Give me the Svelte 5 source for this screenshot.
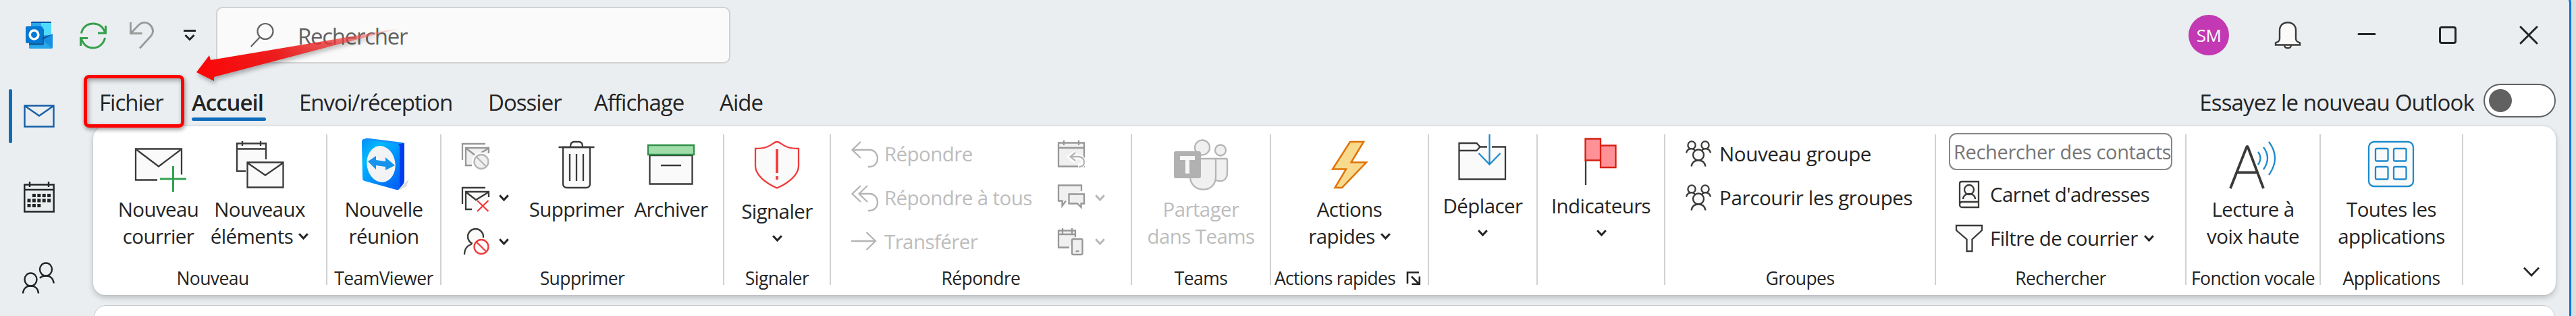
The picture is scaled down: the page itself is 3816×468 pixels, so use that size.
<script lang="ts">
  const tabs = ['Fichier', 'Accueil', 'Envoi/réception', 'Dossier', 'Affichage', 'Aide'];
  const active = 'Accueil';

  // day squares of the calendar icon, as column/row pairs
  const days = [
    [1, 0], [2, 0], [3, 0], [4, 0],
    [0, 1], [1, 1], [2, 1], [3, 1], [4, 1],
    [0, 2], [1, 2], [2, 2],
  ];
</script>

{#snippet chevron()}
  <svg class="chevron" width="15" height="10" viewBox="0 0 15 10" aria-hidden="true">
    <path d="M1.2 1.2 7.5 8 13.8 1.2" />
  </svg>
{/snippet}

{#snippet people()}
  <svg class="line" width="38" height="40" viewBox="0 0 38 40" aria-hidden="true">
    <g fill="#fafafa">
      <circle cx="9" cy="7" r="5.6" />
      <circle cx="29" cy="7" r="5.6" />
      <path d="M1 18.500c.5-4 4-6.500 8-6.200 2 0 4 1 5 2.500M37 18.500c-.5-4-4-6.500-8-6.200-2 0-4 1-5 2.500" />
      <circle cx="19" cy="21.500" r="8" />
      <path d="M8.500 38.500c1-6 5-9 10.500-9s9.500 3 10.500 9" />
    </g>
  </svg>
{/snippet}

{#snippet envelopes()}
  <path d="M1 25V1h34" />
  <path class="fill" d="M15 33H6V7h34v8" />
  <path d="m7 8 14 11L39 8" />
{/snippet}

{#snippet block()}
  <circle cx="29" cy="27.500" r="14" class="halo" />
  <circle cx="29" cy="27.500" r="10.500" />
  <path d="m21.500 20 15 15" />
{/snippet}

<div class="window">
  <header class="titlebar">
    <svg class="logo" width="40" height="40" viewBox="0 0 40 40" aria-hidden="true">
      <path d="M8 2a2 2 0 0 1 2-2h26a2 2 0 0 1 2 2v20H8z" fill="#28a8ea" />
      <path d="M23 2h15v18H23z" fill="#50d9ff" />
      <path d="M8 2a2 2 0 0 1 2-2h26a2 2 0 0 1 2 2H8z" fill="#0a4fa5" />
      <path d="M5 25h20l15-7v20a2 2 0 0 1-2 2H7a2 2 0 0 1-2-2z" fill="#1890e0" />
      <path d="M5 28h21l13 11.500-1 .5H7a2 2 0 0 1-2-2z" fill="#28a8ea" />
      <path d="m40 18.500-15 8.500v-4l14-4z" fill="#0a4f9c" />
      <path d="M8 10h17a2 2 0 0 1 2 2v21a2 2 0 0 1-2 2H5V20z" fill="#0b4c88" opacity=".75" />
      <rect y="7" width="25" height="25" rx="2" fill="#0078d4" />
      <ellipse cx="12.500" cy="19.500" rx="6.300" ry="6.500" fill="none" stroke="#fff" stroke-width="3.600" />
    </svg>
    <svg class="sync" width="40" height="40" viewBox="0 0 40 40" aria-hidden="true">
      <path d="M2.500 17.500C4 8.500 11 3 20 3c8.500 0 14.500 4.500 17.500 13M38.500 6v11H27M37.500 24c-1.500 8-8.500 15-17.500 15-8.500 0-14.500-5-17.500-13.500M1.500 36V24.500H12" />
    </svg>
    <svg class="undo" width="36" height="40" viewBox="0 0 36 40" aria-hidden="true">
      <path d="M1.500 1v16.500h17M2 17 14 4.500C19 0 26.500.5 31 5.500c4.500 5.500 4.500 11.500 0 16.500L15 39.500" />
    </svg>
    <svg class="customize" width="18" height="18" viewBox="0 0 18 18" aria-hidden="true">
      <path d="M0 2.500h18M2.500 9 9 15.500 15.500 9" />
    </svg>
    <div class="search">
      <svg width="35" height="36" viewBox="0 0 35 36" aria-hidden="true">
        <circle cx="22" cy="12.500" r="11.500" />
        <path d="M14 21 .8 35" />
      </svg>
      <span>Rechercher</span>
    </div>

    <div class="controls">
      <div class="avatar">SM</div>
      <svg class="bell" width="38" height="40" viewBox="0 0 38 40" aria-hidden="true">
        <path d="M14 35c.5 5.500 9.500 5.500 10 0" />
        <path d="M1 34.500v-3l4-2c1.500-1 2-2 2-4V13C7 6 12 1.200 19 1.200S31 6 31 13v12.500c0 2 .5 3 2 4l4 2v3z" />
      </svg>
      <svg class="caption" width="26" height="28" viewBox="0 0 26 28" aria-hidden="true">
        <path d="M1 12.500h24" />
      </svg>
      <svg class="caption" width="26" height="28" viewBox="0 0 26 28" aria-hidden="true">
        <rect x="1.500" y="2.500" width="23" height="23" rx="2.500" />
      </svg>
      <svg class="caption" width="26" height="28" viewBox="0 0 26 28" aria-hidden="true">
        <path d="m1 2 24 24M25 2 1 26" />
      </svg>
    </div>
  </header>

  <div class="content">
    <nav class="rail">
      <div class="rail-item selected">
        <svg width="46" height="34" viewBox="0 0 46 34" aria-hidden="true">
          <path d="M1.500 1.500h43v31h-43zM2 2l21 14.500L44 2" />
        </svg>
      </div>
      <div class="rail-item">
        <svg width="46" height="46" viewBox="0 0 46 46" aria-hidden="true">
          <path d="M1.300 4.500h43.400v40H1.300zM1.300 12h43.400M9 0v8M37 0v8" />
          {#each days as [col, row]}
            <rect x={5.5 + col * 7.4} y={18 + row * 7.5} width="5" height="5" />
          {/each}
        </svg>
      </div>
      <div class="rail-item">
        <svg width="48" height="48" viewBox="0 0 48 48" aria-hidden="true">
          <ellipse cx="35" cy="11" rx="9" ry="9.500" />
          <ellipse cx="12.500" cy="26" rx="9" ry="9.500" />
          <path d="M1 46.500c.5-7 5-11 11.500-11s11 4 11.500 11M26 24c2-2.500 5-3.500 9-3.500 6.500 0 11 4 11.700 11" />
        </svg>
      </div>
    </nav>

    <main>
      <div class="tab-row">
        <div class="tabs">
          {#each tabs as tab}
            <span class="tab" class:active={tab === active}>{tab}</span>
          {/each}
        </div>
        <div class="try-new">
          <span>Essayez le nouveau Outlook</span>
          <span class="toggle"></span>
        </div>
      </div>

      <section class="ribbon">
        <div class="group new">
          <div class="body">
            <div class="big">
              <svg class="line" width="80" height="80" viewBox="0 0 80 80" aria-hidden="true">
                <path class="fill" d="M38 62.500H6v-46h68v38" />
                <path d="m7 17.500 33 25 33-25" />
                <path class="green" d="M61.500 42v38M42 61h39" />
              </svg>
              <span>Nouveau<br />courrier</span>
            </div>
            <div class="big">
              <svg class="line" width="80" height="80" viewBox="0 0 80 80" aria-hidden="true">
                <path class="fill" d="M19 49.500H6V8.500h43V32M6 16.500h43M14 5v7M41 5v7" />
                <path class="fill" d="M21.500 36.500h53v37h-53z" />
                <path d="m22 37.500 26 18 26-18" />
              </svg>
              <span>Nouveaux<br />éléments {@render chevron()}</span>
            </div>
          </div>
          <div class="caption-text">Nouveau</div>
        </div>

        <div class="group teamviewer">
          <div class="body">
            <div class="big">
              <svg width="80" height="80" viewBox="0 0 80 80" aria-hidden="true">
                <defs>
                  <linearGradient id="tv" x1="0" y1="0" x2=".8" y2="1">
                    <stop offset="0" stop-color="#0a8cf5" />
                    <stop offset=".3" stop-color="#00b9ff" />
                    <stop offset=".6" stop-color="#0094ff" />
                    <stop offset="1" stop-color="#0066f5" />
                  </linearGradient>
                </defs>
                <path d="M62 76 77 61l-4 11-9 5z" fill="#bbb" opacity=".5" />
                <path d="M8 3 14 .5l53 6.500q3 1 3 4l-8 2z" fill="#1590ff" />
                <path d="M60 10 70 7.500v56q0 4-3 7l-6 6.500z" fill="#003cf0" />
                <path d="M7 6q0-4 4-4l47 7q5 1 5 5v59q0 5-5 4L11 64q-3-1-3-4z" fill="url(#tv)" />
                <ellipse cx="35.500" cy="39" rx="21" ry="27" transform="rotate(-8 35.500 39)" fill="#f1f3f5" />
                <path d="m16 35 12-8v6l14 2v-6l14 12-14 7v-5l-14-2v6z" fill="#1793ee" />
              </svg>
              <span>Nouvelle<br />réunion</span>
            </div>
          </div>
          <div class="caption-text">TeamViewer</div>
        </div>

        <div class="group delete">
          <div class="body">
            <div class="stack">
              <div class="small">
                <svg class="line disabled" width="40" height="40" viewBox="0 -4 40 40" aria-hidden="true">
                  {@render envelopes()}
                  <g class="light fill-block">{@render block()}</g>
                </svg>
              </div>
              <div class="small">
                <svg class="line" width="40" height="40" viewBox="0 -4 40 40" aria-hidden="true">
                  {@render envelopes()}
                  <path class="halo" d="m24 20 16 16M40 20 24 36" />
                  <path class="red" d="m23 20 16.500 16M39.500 20 23 36" />
                </svg>
                {@render chevron()}
              </div>
              <div class="small">
                <svg class="line" width="40" height="40" viewBox="0 0 40 40" aria-hidden="true">
                  <circle class="fill" cx="20.500" cy="12.500" r="11.500" />
                  <path class="fill" d="M4 39c0-8 4-14 13-16" />
                  <g class="red">{@render block()}</g>
                </svg>
                {@render chevron()}
              </div>
            </div>
            <div class="big">
              <svg class="line" width="80" height="80" viewBox="0 0 80 80" aria-hidden="true">
                <path d="M31 13c0-5 2-7 6-7h6c4 0 6 2 6 7" />
                <path class="fill" d="M20 14v54c0 4 2 6 6 6h28c4 0 6-2 6-6V14z" />
                <path d="M13.500 14h53M30 24v40M40 24v40M50 24v40" />
              </svg>
              <span>Supprimer</span>
            </div>
            <div class="big">
              <svg class="line" width="80" height="80" viewBox="0 0 80 80" aria-hidden="true">
                <path class="fill" d="M8.500 26h63v42.500h-63zM25 41h30" />
                <path class="lid" d="M6 11h68v14H6z" />
              </svg>
              <span>Archiver</span>
            </div>
          </div>
          <div class="caption-text">Supprimer</div>
        </div>

        <div class="group report">
          <div class="body">
            <div class="big">
              <svg class="line red" width="80" height="80" viewBox="0 0 80 80" aria-hidden="true">
                <path class="fill" d="M40 6c5 0 8 6 16 8 6 2 11 2 16 2v26c0 13-15 25-32 32.500C23 67 8 55 8 42V16c5 0 10 0 16-2 8-2 11-8 16-8z" />
                <path d="M40 17v35M40 57v5" class="heavy" />
              </svg>
              <span>Signaler<br />{@render chevron()}</span>
            </div>
          </div>
          <div class="caption-text">Signaler</div>
        </div>

        <div class="group reply">
          <div class="body">
            <div class="stack">
              <div class="small off">
                <svg class="line light" width="40" height="40" viewBox="0 0 40 40" aria-hidden="true">
                  <path d="M14 2 1.500 14 14 26M2 14h25c16 0 16 25 0 25h-2" />
                </svg>
                <span>Répondre</span>
              </div>
              <div class="small off">
                <svg class="line light" width="40" height="40" viewBox="0 0 40 40" aria-hidden="true">
                  <path d="M14 2 1.500 14 14 26M24 2 11.500 14 24 26M12 14h15c16 0 16 25 0 25h-2" />
                </svg>
                <span>Répondre à tous</span>
              </div>
              <div class="small off">
                <svg class="line light" width="40" height="40" viewBox="0 0 40 40" aria-hidden="true">
                  <path d="M0 19h36M22.500 6 36 19 22.500 32" />
                </svg>
                <span>Transférer</span>
              </div>
            </div>
            <div class="stack more">
              <div class="small off">
                <svg class="line disabled" width="40" height="40" viewBox="0 0 40 40" aria-hidden="true">
                  <path class="fill" d="M1 3.500h38v35H1zM1 11h38M9 0v7M31 0v7" />
                  <path class="halo" d="m26 18-8 6 8 7M18 24h12q8 1 8 8 0 6-8 6" />
                  <path class="light" d="m26 18-7.500 6 7.500 6M19 24h12q8 1 8 8 0 7-8 7" />
                </svg>
              </div>
              <div class="small off">
                <svg class="line disabled" width="40" height="40" viewBox="0 0 40 40" aria-hidden="true">
                  <path class="fill" d="M12 24.500 6.500 32v-7.500H1V1.500h34V10" />
                  <path class="fill" d="M16.500 14.500H39v14h-4.500V34L29 28.500H16.500z" />
                </svg>
                {@render chevron()}
              </div>
              <div class="small off">
                <svg class="line disabled" width="40" height="40" viewBox="0 0 40 40" aria-hidden="true">
                  <path class="fill" d="M17 28.500H1V3.500h25V13M1 9h25M7 0v8M21 0v8" />
                  <rect class="fill" x="21" y="16" width="15.500" height="23" rx="2" />
                  <path d="M26.500 34h5" />
                </svg>
                {@render chevron()}
              </div>
            </div>
          </div>
          <div class="caption-text">Répondre</div>
        </div>

        <div class="group teams">
          <div class="body">
            <div class="big off">
              <svg class="line light" width="80" height="80" viewBox="0 0 80 80" aria-hidden="true">
                <g fill="#f0f0f0">
                  <circle cx="42" cy="14.500" r="11" />
                  <circle cx="69" cy="18.500" r="8" />
                  <path d="M61 31h16q2 0 2 2v19c0 10-7 13-12 12-3 0-5-1-6-2z" />
                  <path d="M24 31h36q2 0 2 2v25c0 25-38 25-38-1z" />
                </g>
                <rect y="20" width="40" height="40" rx="3" fill="#b1b1b1" stroke="none" />
                <path d="M9 30h22M20 30v23" stroke="#f7f7f7" stroke-width="6" />
              </svg>
              <span>Partager<br />dans Teams</span>
            </div>
          </div>
          <div class="caption-text">Teams</div>
        </div>

        <div class="group quick">
          <div class="body">
            <div class="big">
              <svg width="80" height="80" viewBox="0 0 80 80" aria-hidden="true">
                <path d="M41 6h20L42.500 36.500H65L29 74H18.500L35 46.500H15z" fill="#f8da8f" stroke="#e07305" stroke-width="2.500" />
              </svg>
              <span>Actions<br />rapides {@render chevron()}</span>
            </div>
          </div>
          <div class="caption-text">
            Actions rapides
            <svg class="launcher" width="20" height="20" viewBox="0 0 20 20" aria-hidden="true">
              <path d="M1 18V1.500h17M7 7.500l11 11M18.800 7.500v11.300H7.500" />
            </svg>
          </div>
        </div>

        <div class="group move">
          <div class="body">
            <div class="big">
              <svg class="line" width="80" height="80" viewBox="0 0 80 80" aria-hidden="true">
                <path class="fill" d="M5.500 13h26l5 5.500H74v48H5.500z" />
                <path d="M5.500 24h26l5-5.500" />
                <path class="halo" d="M50.500 12v12" />
                <path class="blue" d="M50.500 0v44M34.500 28l16 16.500 16-16.500" />
              </svg>
              <span>Déplacer<br />{@render chevron()}</span>
            </div>
          </div>
        </div>

        <div class="group flags">
          <div class="body">
            <div class="big">
              <svg class="line" width="80" height="80" viewBox="0 0 80 80" aria-hidden="true">
                <path d="M17 38v37" />
                <path class="flag" d="M39 16.500h22.500v32.500H39zM16.500 6.500H39v32H16.500z" />
              </svg>
              <span>Indicateurs<br />{@render chevron()}</span>
            </div>
          </div>
        </div>

        <div class="group groups">
          <div class="body">
            <div class="stack">
              <div class="small">{@render people()}<span>Nouveau groupe</span></div>
              <div class="small">{@render people()}<span>Parcourir les groupes</span></div>
            </div>
          </div>
          <div class="caption-text">Groupes</div>
        </div>

        <div class="group find">
          <div class="body">
            <div class="stack">
              <div class="contact-search">Rechercher des contacts</div>
              <div class="small">
                <svg class="line" width="40" height="40" viewBox="0 0 40 40" aria-hidden="true">
                  <path class="fill" d="M34 31V1H9Q6 1 6 4v31q0 4 4 4h24v-8H10q-4 0-4 4" />
                  <circle cx="20" cy="13" r="7" />
                  <path d="M11 27c0-5 4-8 9-8s9 3 9 8" />
                </svg>
                <span>Carnet d'adresses</span>
              </div>
              <div class="small">
                <svg class="line" width="40" height="40" viewBox="0 0 40 40" aria-hidden="true">
                  <path class="fill" d="M1 1h38v7L24.500 21.500V39h-8V21.500L1 8z" />
                </svg>
                <span>Filtre de courrier</span>
                {@render chevron()}
              </div>
            </div>
          </div>
          <div class="caption-text">Rechercher</div>
        </div>

        <div class="group speech">
          <div class="body">
            <div class="big">
              <svg class="line" width="80" height="80" viewBox="0 0 80 80" aria-hidden="true">
                <path d="M7 75 31 14q1-2 2 0l23 61M17 51.500h29" class="heavy" />
                <path class="blue" d="M48 21q7 9 0 19M56 14q12 16 0 33M64 6q18 24 0 49" />
              </svg>
              <span>Lecture à<br />voix haute</span>
            </div>
          </div>
          <div class="caption-text">Fonction vocale</div>
        </div>

        <div class="group apps">
          <div class="body">
            <div class="big">
              <svg class="line blue" width="80" height="80" viewBox="0 0 80 80" aria-hidden="true">
                <rect class="fill" x="6" y="6" width="66" height="66" rx="8" />
                {#each [16, 43] as x}
                  {#each [16, 43] as y}
                    <rect {x} {y} width="18.500" height="18.500" rx="2" />
                  {/each}
                {/each}
              </svg>
              <span>Toutes les<br />applications</span>
            </div>
          </div>
          <div class="caption-text">Applications</div>
        </div>

        <svg class="collapse" width="24" height="15" viewBox="0 0 24 15" aria-hidden="true">
          <path d="m1 1.500 11 11.500 11-11.500" />
        </svg>
      </section>

      <section class="pane"></section>
    </main>
  </div>

  <!-- callout over the Fichier tab -->
  <div class="highlight"></div>
  <svg class="arrow" width="320" height="110" viewBox="0 0 320 110" aria-hidden="true">
    <defs>
      <linearGradient id="fade" x1="10" y1="0" x2="311" y2="0" gradientUnits="userSpaceOnUse">
        <stop offset="0" stop-color="#fc0606" />
        <stop offset=".4" stop-color="#ee1414" stop-opacity=".95" />
        <stop offset=".75" stop-color="#ee4040" stop-opacity=".72" />
        <stop offset="1" stop-color="#f88" stop-opacity=".2" />
      </linearGradient>
    </defs>
    <path d="M11 77 30 52l2 7L312 12 37 84v6z" fill="url(#fade)" />
  </svg>
</div>

<style>
  :global(body) {
    overflow: hidden;
    background: #dcdddd;
  }
  .window {
    position: relative;
    box-sizing: border-box;
    width: 3809px;
    height: 484px;
    margin-top: -16px;
    padding-top: 13px;
    border: solid #0078d4;
    border-width: 3px 3px 0 0;
    border-radius: 0 22px 0 0;
    overflow: hidden;
    background: #eaeef1;
    color: #242424;
    font-family: 'Open Sans', 'Noto Sans', sans-serif;
    white-space: nowrap;
  }
  svg {
    display: block;
    flex: none;
    overflow: visible;
    fill: none;
  }

  .titlebar {
    display: flex;
    align-items: center;
    height: 104px;
    padding-left: 38px;
  }
  .sync {
    margin-left: 40px;
    stroke: #359f4b;
    stroke-width: 3;
  }
  .undo {
    margin-left: 34px;
    stroke: #999;
    stroke-width: 2.8;
  }
  .customize {
    margin-left: 44px;
    stroke: #242424;
    stroke-width: 3;
  }
  .search {
    display: flex;
    align-items: center;
    box-sizing: border-box;
    width: 762px;
    height: 84px;
    margin-left: 30px;
    padding-left: 49px;
    border: 2px solid #d1d1d1;
    border-radius: 10px;
    background: #fafafa;
    color: #616161;
    font-size: 33px;
    letter-spacing: -0.039em;
  }
  .search svg {
    stroke: #616161;
    stroke-width: 2.2;
  }
  .search span {
    padding: 3px 0 0 35px;
  }
  .controls {
    display: flex;
    align-items: center;
    margin-left: auto;
    padding-right: 47px;
  }
  .avatar {
    width: 60px;
    margin-right: 68px;
    border-radius: 50%;
    background: #c239b3;
    color: #fff;
    font-size: 26px;
    line-height: 60px;
    text-align: center;
    letter-spacing: -0.02em;
  }
  .bell {
    margin-right: 85px;
    fill: #fafafa;
    stroke: #3a3a38;
    stroke-width: 2.4;
  }
  .caption {
    stroke: #242424;
    stroke-width: 3;
    stroke-linecap: round;
  }
  .caption + .caption {
    margin-left: 94px;
  }

  .content {
    display: flex;
    height: 364px;
  }
  .rail {
    width: 138px;
    padding-top: 28px;
    box-sizing: border-box;
  }
  .rail-item {
    display: flex;
    align-items: center;
    box-sizing: border-box;
    height: 80px;
    margin-bottom: 40px;
    padding-left: 35px;
    fill: #242424;
    stroke: #242424;
    stroke-width: 2.4;
  }
  .rail-item rect {
    fill: #242424;
    stroke: none;
  }
  .rail-item:last-child svg {
    margin-left: -2px;
  }
  .selected {
    stroke: #155fa8;
    padding-left: 18px;
  }
  .selected::before {
    content: '';
    width: 5px;
    height: 80px;
    margin: 0 17px 0 -5px;
    border-radius: 3px;
    background: #0f6cbd;
  }

  .tab-row {
    display: flex;
    justify-content: space-between;
    align-items: center;
    box-sizing: border-box;
    height: 83px;
    padding-top: 12px;
    font-size: 33px;
    letter-spacing: -0.03em;
  }
  .tabs {
    display: grid;
    grid-template-columns: 136px 160px 280px 157px 186px auto;
    padding-left: 9px;
  }
  .tab {
    position: relative;
    justify-self: start;
  }
  .active {
    margin-left: 1px;
    font-weight: 600;
    letter-spacing: -0.03em;
  }
  .active::after {
    content: '';
    position: absolute;
    left: 0;
    bottom: -5px;
    width: 110px;
    height: 5px;
    border-radius: 3px;
    background: #0f6cbd;
  }
  .try-new {
    display: flex;
    align-items: center;
    gap: 14px;
    letter-spacing: -0.025em;
  }
  .toggle {
    box-sizing: border-box;
    width: 107px;
    height: 50px;
    margin-top: -5px;
    padding: 6px;
    border: 2px solid #616161;
    border-radius: 25px;
    background: #fff;
  }
  .toggle::before {
    content: '';
    display: block;
    width: 34px;
    height: 34px;
    border-radius: 50%;
    background: #616161;
  }

  .ribbon {
    display: flex;
    box-sizing: border-box;
    width: 3648px;
    height: 250px;
    border-radius: 18px;
    background: #fff;
    box-shadow: 0 0 2px rgba(0, 0, 0, 0.16), 0 4px 8px rgba(0, 0, 0, 0.2);
    font-size: 29.5px;
    letter-spacing: -0.02em;
  }
  .group {
    position: relative;
    display: flex;
    flex-direction: column;
    justify-content: space-between;
    box-sizing: border-box;
    padding: 8px 2px 7px 0;
  }
  .group::after {
    content: '';
    position: absolute;
    top: 12px;
    right: 0;
    width: 2px;
    height: 223px;
    background: #d1d1d1;
  }
  .body {
    display: flex;
    justify-content: center;
  }
  .big {
    display: flex;
    flex-direction: column;
    align-items: center;
    padding-top: 9px;
    line-height: 40px;
    text-align: center;
  }
  .big span {
    margin-top: 6px;
  }
  .caption-text {
    font-size: 26.5px;
    line-height: 36px;
    text-align: center;
  }
  .small {
    display: flex;
    align-items: center;
    height: 65px;
  }
  .small span {
    margin-left: 9px;
  }
  .small > .chevron {
    margin-left: 15px;
  }
  .off {
    color: #bdbdbd;
  }

  .new {
    width: 347px;
  }
  .new .body {
    padding-right: 2px;
  }
  .new .big {
    width: 150px;
  }
  .new .caption-text {
    padding-left: 9px;
  }
  .teamviewer {
    width: 169px;
  }
  .delete {
    width: 419px;
  }
  .delete .body {
    justify-content: flex-start;
    padding-left: 30px;
  }
  .delete .stack {
    width: 100px;
  }
  .delete .big {
    width: 140px;
  }
  .report {
    width: 158px;
  }
  .report .big span {
    margin-top: 9px;
  }
  .reply {
    width: 446px;
  }
  .reply .body {
    justify-content: flex-start;
    padding-left: 30px;
  }
  .reply .more {
    width: 80px;
  }
  .reply .stack:first-child {
    width: 306px;
  }
  .teams {
    width: 206px;
  }
  .quick {
    width: 234px;
  }
  .quick .caption-text {
    display: flex;
    align-items: center;
    gap: 17px;
    padding-left: 5px;
    letter-spacing: -0.026em;
  }
  .move {
    width: 161px;
  }
  .flags {
    width: 189px;
  }
  .move .big,
  .flags .big {
    padding-top: 4px;
  }
  .groups {
    width: 401px;
  }
  .groups .body {
    justify-content: flex-start;
    padding-left: 30px;
    letter-spacing: -0.012em;
  }
  .groups .small span {
    margin-left: 12px;
  }
  .find {
    width: 371px;
  }
  .find .small {
    padding-left: 10px;
  }
  .find .small span {
    margin-left: 11px;
  }
  .find .small > .chevron {
    margin-left: 9px;
  }
  .contact-search {
    box-sizing: border-box;
    width: 331px;
    height: 55px;
    margin: 2px 0 3px;
    padding-left: 5px;
    border: 2px solid #868686;
    border-radius: 11px;
    color: #767676;
    font-size: 29px;
    line-height: 52px;
    letter-spacing: -0.012em;
  }
  .speech {
    width: 199px;
  }
  .apps {
    width: 211px;
  }
  .collapse {
    align-self: flex-end;
    margin: 0 24px 27px auto;
    stroke: #242424;
    stroke-width: 2.6;
  }
  .pane {
    height: 40px;
    width: 3646px;
    margin: 15px 0 0 1px;
    box-sizing: border-box;
    border: 1px solid #c8cacb;
    border-radius: 18px;
    background: #fff;
  }

  .chevron {
    stroke: #242424;
    stroke-width: 3;
  }
  .off .chevron {
    stroke: #b8b8b8;
  }
  .big .chevron {
    display: inline-block;
    vertical-align: 6px;
    margin-left: 1px;
  }
  .launcher {
    stroke: #242424;
    stroke-width: 2.6;
  }
  .line {
    stroke: #3a3a38;
    stroke-width: 2.3;
  }
  .fill {
    fill: #fafafa;
  }
  .disabled {
    stroke: #979797;
  }
  .disabled .fill {
    fill: #f0f0f0;
  }
  .light {
    stroke: #b5b5b5;
  }
  .fill-block {
    fill: #f0f0f0;
  }
  .red {
    stroke: #ef3b3b;
  }
  .green {
    stroke: #30a14e;
    stroke-width: 3;
  }
  .blue {
    stroke: #1e8bcd;
  }
  .heavy {
    stroke-width: 3.8;
  }
  .halo {
    fill: none;
    stroke: #fff;
    stroke-width: 7;
  }
  circle.halo {
    fill: #fff;
    stroke: none;
  }
  .lid {
    fill: #a1ddaa;
    stroke: #309048;
  }
  .flag {
    fill: #ff9197;
    stroke: #d52013;
  }

  .highlight {
    position: absolute;
    top: 124px;
    left: 124px;
    box-sizing: border-box;
    width: 149px;
    height: 78px;
    border: 5px solid #f00;
    border-radius: 8px;
    box-shadow: 1px 3px 6px rgba(0, 0, 0, 0.4), inset 2px 3px 7px rgba(0, 0, 0, 0.35);
  }
  .arrow {
    position: absolute;
    top: 43px;
    left: 280px;
    filter: drop-shadow(2px 4px 3px rgba(0, 0, 0, 0.3));
  }
</style>
